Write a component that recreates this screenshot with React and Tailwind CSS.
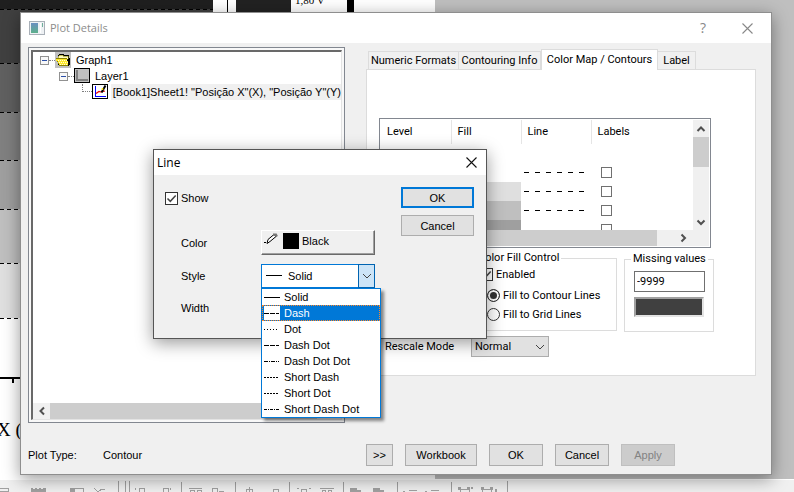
import React, { useState } from "react";

const ui = "font-['Liberation_Sans',Arial,sans-serif] text-[11px] leading-4 text-black";
const pushButton =
  "flex h-[22px] items-center justify-center border border-[#adadad] bg-[#e1e1e1] leading-4";

function Chevron({ dir, className = "" }) {
  const d = {
    up: "M1.5 7 5 3.5 8.5 7",
    down: "M1.5 3.5 5 7 8.5 3.5",
    left: "M7 1.5 3.5 5 7 8.5",
    right: "M3.5 1.5 7 5 3.5 8.5",
  }[dir];
  return (
    <svg viewBox="0 0 10 10" className={"size-[10px] " + className} fill="none" stroke="#505050" strokeWidth="2">
      <path d={d} />
    </svg>
  );
}

function CloseIcon({ color }) {
  return (
    <svg viewBox="0 0 11 11" className="size-[11px]" fill="none" stroke={color} strokeWidth="1.1">
      <path d="M.5.5l10 10M10.5.5l-10 10" />
    </svg>
  );
}

function Tick({ label, ...rest }) {
  return (
    <label className="flex items-center gap-[3px]">
      <span className="relative flex size-[13px] shrink-0">
        <input
          type="checkbox"
          className="peer size-full appearance-none border border-[#333] bg-white"
          {...rest}
        />
        <svg
          viewBox="0 0 13 13"
          className="pointer-events-none absolute inset-0 hidden peer-checked:block"
          fill="none"
          stroke="#444"
          strokeWidth="1.5"
        >
          <path d="M2.5 6.5 5.3 9.3 10.7 3.5" />
        </svg>
      </span>
      {label}
    </label>
  );
}

function Radio({ label, ...rest }) {
  return (
    <label className="flex h-[19px] items-center gap-[3px]">
      <input
        type="radio"
        name="fill"
        className="size-[13px] shrink-0 appearance-none rounded-full border border-[#333] bg-white checked:bg-[#333] checked:shadow-[inset_0_0_0_2px_white]"
        {...rest}
      />
      {label}
    </label>
  );
}

/* Contour plot behind the dialogs */
function Plot() {
  const bands = [
    [0, 9, "#1f1f1f"],
    [9, 54, "#404040"],
    [63, 49, "#606060"],
    [112, 48, "#808080"],
    [160, 49, "#9f9f9f"],
    [209, 54, "#bfbfbf"],
    [263, 55, "#dfdfdf"],
  ];
  return (
    <svg width="435" height="479" className="block shrink-0 bg-white" shapeRendering="crispEdges">
      {bands.map(([y, h, fill]) => (
        <rect key={y} x="0" y={y} width="213" height={h} fill={fill} />
      ))}
      {[9, 63, 112, 160, 209, 263, 318].map((y) => (
        <path key={y} d={`M0 ${y}.5H213`} stroke="#000" strokeDasharray="4 3" />
      ))}
      <rect x="227" y="0" width="1" height="378" fill="#000" />
      <rect x="236" y="0" width="55" height="378" fill="#222" />
      <rect x="347" y="0" width="7" height="378" fill="#000" />
      <rect x="0" y="377" width="213" height="2" fill="#000" />
      <rect x="12" y="377" width="2" height="6" fill="#000" />
      <text x="295" y="4" fontSize="11" fontFamily="Liberation Serif, serif">1,80 V</text>
      <text x="-3" y="436" fontSize="19" fontFamily="Liberation Serif, serif">X (</text>
    </svg>
  );
}

function Toolbar() {
  return (
    <div className="h-[13px] overflow-hidden border-t border-white bg-[#f0f0f0]">
      <svg width="794" height="12" fill="none" stroke="#a0a0a0" shapeRendering="crispEdges">
        <path d="M118.5 1v11M125.5 1v11M129.5 1v11M181.5 2v10M235.5 2v10M289.5 2v10M343.5 2v10M397.5 2v10M451.5 2v10M507.5 1v11" />
        <path d="M0 8.5h8v4M0 11.5h8M70 8.5h13v4M70 8v4M94 8l4 4 4-3 3 1" />
        <path d="M135.5 8v2M139.5 12V8.500h5V12M163.500 12V8.500h5V12M170.500 8v2" />
        <path d="M189 8.500h13M190.500 12v-2h4v2M197.500 12v-2h4v2M212.500 12V8.500h5V12M219 11.500h5" />
        <path d="M249.500 7v5M246.500 12V9.500h6V12M273.500 12V9.500h5V12M297 8.500h2M301.500 12V9.500h5V12M309 8.500h2M320 8.500h14M322.500 12v-2h3v2M328.500 12v-2h3v2" />
        <path d="M403 11.500h2M409 10.500h8M425 11.500h2M431 10.500h8M460.500 12V9.500h9V12M482.500 12V9.500h9V12" />
        <path
          fill="#a0a0a0"
          stroke="none"
          d="M31 8h2v1h2v-1h2v1h2v-1h2v1h2v-1h3v4h-15zM70 8h5v4h-5zM350 8h7v2h4v2h-11zM373 8h7v2h4v2h-11zM458 7h3v3h-3zM467 7h3v3h-3zM471 7h2v2h-2zM481 7h3v3h-3zM490 7h3v3h-3zM495 9h2v3h-2z"
        />
      </svg>
    </div>
  );
}

function Expander() {
  return (
    <svg width="9" height="9" className="shrink-0" shapeRendering="crispEdges">
      <rect x=".5" y=".5" width="8" height="8" rx="1" fill="#f8f8f8" stroke="#919191" />
      <path d="M2 4.500h5" stroke="#2b4fa8" />
    </svg>
  );
}

function FolderIcon() {
  return (
    <svg width="16" height="16" className="shrink-0 bg-[#c0c0c0]" shapeRendering="crispEdges">
      <path d="M3 3h1V2h5v1h5v3h1v7h-1v1H5v-1H3z" fill="#000" />
      <path d="M3 4h1V3h4v1h5v3H3z" fill="#fffbc0" stroke="#8a8300" strokeWidth=".5" />
      <path d="M1 7h11v2h1v4H4v-2H3V9H1z" fill="#ffe92b" />
      <path d="M1 6.500h11M2 9.500h1M3 11.500h1M4 13.500h9" stroke="#8a8300" />
      <path d="M3 8.500h9M4 10.500h9M5 12.500h8" stroke="#fffde0" strokeDasharray="1 1" />
    </svg>
  );
}

function LayerIcon() {
  return (
    <svg width="16" height="16" className="shrink-0" shapeRendering="crispEdges">
      <rect x=".5" y=".5" width="15" height="14" fill="#c0c0c0" stroke="#000" />
      <path d="M3 2v9.500h11" fill="none" stroke="#808080" strokeWidth="2" />
    </svg>
  );
}

function PlotIcon() {
  return (
    <svg width="16" height="16" className="shrink-0">
      <g shapeRendering="crispEdges">
        <rect x=".5" y=".5" width="15" height="14" fill="#fff" stroke="#000" />
        <path d="M3.500 2v10.500H14" fill="none" stroke="#00f" />
      </g>
      <path d="M4 9.500 7 7.500l2 .5 4-1" fill="none" stroke="#e00" strokeWidth="1.200" />
      <path d="M9.500 8.500 13.500 1.500" stroke="#000" strokeWidth="2" />
      <path d="M10.500 4v2" stroke="#ffe000" strokeWidth="1.500" />
    </svg>
  );
}

function Tree() {
  return (
    <div className="flex w-[317px] shrink-0 border border-[#828790] bg-[#f8f8f8] p-[2px]">
      <div className="flex min-w-0 flex-1 flex-col overflow-hidden border-t-2 border-r border-b border-l-2 border-t-[#696969] border-r-[#e3e3e3] border-b-[#e3e3e3] border-l-[#696969] bg-white">
        <ul role="tree" className="flex-1 whitespace-nowrap">
          <li role="treeitem" className="flex h-4 items-center pl-[7px]">
            <Expander />
            <span className="w-[6px] border-t border-dotted border-[#808080]" />
            <FolderIcon />
            <span className="pl-[5px]">Graph1</span>
          </li>
          <li role="treeitem" className="flex h-4 items-center pl-[26px]">
            <Expander />
            <span className="w-[6px] border-t border-dotted border-[#808080]" />
            <LayerIcon />
            <span className="pl-[5px]">Layer1</span>
          </li>
          <li role="treeitem" aria-selected="true" className="flex h-4 items-center pl-[49px]">
            <span className="h-2 w-[11px] self-start border-b border-l border-dotted border-[#808080]" />
            <PlotIcon />
            <span className="ml-[3px] flex-1 bg-[#f0f0f0] pl-[2px]">[Book1]Sheet1! "Posição X"(X), "Posição Y"(Y)</span>
          </li>
        </ul>
        <div className="flex h-4 bg-[#f0f0f0]">
          <span className="flex w-[17px] items-center justify-center">
            <Chevron dir="left" />
          </span>
          <span className="mr-6 flex-1 bg-[#cdcdcd]" />
        </div>
      </div>
    </div>
  );
}

const levels = [
  { level: "< 0.01", fill: "bg-white" },
  { level: "0.01", fill: "bg-white", line: true, box: true },
  { level: "0.236", fill: "bg-[#dfdfdf]", line: true, box: true },
  { level: "0.463", fill: "bg-[#bfbfbf]", line: true, box: true },
  { level: "", fill: "bg-[#9f9f9f]", box: true },
];

function LevelTable() {
  return (
    <div className="flex h-[130px] w-[332px] flex-col border border-[#828790] bg-white p-px">
      <div className="flex min-h-0 flex-1">
        <div className="flex-1 overflow-hidden">
          <table className="w-full table-fixed text-left">
            <thead>
              <tr className="h-6">
                {["Level", "Fill", "Line"].map((h) => (
                  <th key={h} className="w-[70px] border-r border-[#e5e5e5] pl-[6px] font-normal">
                    {h}
                  </th>
                ))}
                <th className="pl-[6px] font-normal">Labels</th>
              </tr>
            </thead>
            <tbody>
              {levels.map((l) => (
                <tr key={l.fill + l.level} className="h-[19px]">
                  <td className="pl-[6px]">{l.level}</td>
                  <td className={l.fill} />
                  <td className="pl-[3px]">
                    {l.line && (
                      <svg width="62" height="2" className="block" shapeRendering="crispEdges">
                        <path d="M0 .5h62" stroke="#000" strokeDasharray="5 6" />
                      </svg>
                    )}
                  </td>
                  <td className="pl-[10px]">
                    {l.box && (
                      <input
                        type="checkbox"
                        aria-label="Show label"
                        className="block size-[11px] appearance-none border border-[#707070] bg-white"
                      />
                    )}
                  </td>
                </tr>
              ))}
            </tbody>
          </table>
        </div>
        <div className="flex w-4 flex-col items-center bg-[#f0f0f0]">
          <span className="flex h-[17px] items-center">
            <Chevron dir="up" />
          </span>
          <span className="h-[30px] w-full bg-[#cdcdcd]" />
          <span className="flex-1" />
          <span className="flex h-[17px] items-center">
            <Chevron dir="down" />
          </span>
        </div>
      </div>
      <div className="flex h-4 items-center bg-[#f0f0f0]">
        <span className="h-full w-[276px] bg-[#cdcdcd]" />
        <span className="flex flex-1 items-center justify-center">
          <Chevron dir="right" />
        </span>
      </div>
    </div>
  );
}

function Tabs() {
  const tab = "h-[18px] border border-b-0 border-[#dcdcdc] bg-[#f0f0f0] leading-[18px] whitespace-nowrap";
  return (
    <div role="tablist" className="flex h-5 items-end pl-[2px]">
      <button role="tab" className={tab + " w-[90px] border-r-0"}>Numeric Formats</button>
      <button role="tab" className={tab + " w-[83px]"}>Contouring Info</button>
      <button role="tab" aria-selected="true" className="relative z-10 -mb-px h-[21px] w-[117px] border border-b-0 border-[#dcdcdc] bg-white leading-4 whitespace-nowrap">
        Color Map / Contours
      </button>
      <button role="tab" className={tab + " w-[38px] border-l-0"}>Label</button>
    </div>
  );
}

function ColorMapPanel() {
  return (
    <div className="flex-1 border border-[#dcdcdc] bg-white pt-12 pl-3">
      <LevelTable />
      <div className="mt-1 flex gap-[7px] pl-[91px]">
        <fieldset className="h-[79px] w-[147px] border border-[#dcdcdc] pl-[9px]">
          <legend className="-ml-1 px-[2px] leading-3">Color Fill Control</legend>
          <div className="flex h-[22px] items-center pb-px">
            <Tick label="Enabled" defaultChecked />
          </div>
          <div className="pl-[7px]">
            <Radio label="Fill to Contour Lines" defaultChecked />
            <Radio label="Fill to Grid Lines" />
          </div>
        </fieldset>
        <fieldset className="h-[80px] w-[90px] border border-[#dcdcdc] pl-[9px]">
          <legend className="-ml-[3px] px-[2px]">
            <label htmlFor="missing" className="block leading-[14px]">Missing values</label>
          </legend>
          <input
            id="missing"
            defaultValue="-9999"
            className="mt-[5px] block h-[21px] w-[71px] border border-[#707070] bg-white px-[2px]"
          />
          <button
            aria-label="Missing value color"
            className="mt-[5px] block h-5 w-[70px] border-2 border-t-[#a0a0a0] border-r-[#e3e3e3] border-b-[#e3e3e3] border-l-[#a0a0a0] bg-[#404040]"
          />
        </fieldset>
      </div>
      <div className="mt-[4px] flex items-center pl-[6px]">
        <label htmlFor="rescale" className="w-[86px]">Rescale Mode</label>
        <span className="relative flex">
          <select
            id="rescale"
            className="h-[21px] w-[78px] appearance-none border border-[#adadad] bg-[#e1e1e1] pl-[3px]"
          >
            <option>Normal</option>
          </select>
          <svg viewBox="0 0 10 10" className="pointer-events-none absolute top-[6px] right-1 size-[10px]" fill="none" stroke="#444">
            <path d="M1 3l4 4 4-4" />
          </svg>
        </span>
      </div>
    </div>
  );
}

const styles = [
  ["Solid", "none"],
  ["Dash", "5 1"],
  ["Dot", "1 2"],
  ["Dash Dot", "5 1"],
  ["Dash Dot Dot", "4 1 1 1"],
  ["Short Dash", "2 1"],
  ["Short Dot", "2 1"],
  ["Short Dash Dot", "3 1 1 1"],
];

function StylePicker({ value, onChange }) {
  return (
    <div className="relative">
      <select
        id="style"
        value={value}
        onChange={(e) => onChange(e.target.value)}
        className="block h-6 w-[114px] appearance-none border border-[#0078d7] bg-white pl-[26px]"
      >
        {styles.map(([name]) => (
          <option key={name}>{name}</option>
        ))}
      </select>
      <svg width="16" height="1" className="pointer-events-none absolute top-[11px] left-[5px] bg-black" />
      <span className="pointer-events-none absolute inset-y-0 right-0 flex w-[17px] items-center justify-center border border-[#0063b1] bg-[#cce4f7]">
        <svg viewBox="0 0 10 10" className="size-[10px]" fill="none" stroke="#444">
          <path d="M1 3l4 4 4-4" />
        </svg>
      </span>
      <ul
        role="listbox"
        aria-label="Style"
        className="absolute top-6 left-0 w-[120px] border border-[#0078d7] bg-white shadow-[3px_3px_3px_rgba(0,0,0,0.45)]"
      >
        {styles.map(([name, dash]) => {
          const hot = name === "Dash";
          return (
            <li
              key={name}
              role="option"
              aria-selected={hot}
              onClick={() => onChange(name)}
              className={
                "flex h-4 items-center border border-dotted " +
                (hot ? "border-[#ff8728] bg-[#0078d7] text-white" : "border-transparent")
              }
            >
              <svg width="16" height="14" className="ml-px bg-white" shapeRendering="crispEdges">
                <path d={name === "Solid" ? "M0 7.500h16" : "M0 7.500h15"} stroke="#000" strokeDasharray={dash} />
              </svg>
              <span className="pl-1">{name}</span>
            </li>
          );
        })}
      </ul>
    </div>
  );
}

function LineDialog() {
  const [style, setStyle] = useState("Solid");
  return (
    <section
      role="dialog"
      aria-label="Line"
      className="absolute top-[149px] left-[153px] z-20 flex h-[190px] w-[334px] flex-col border border-[#555] bg-[#f0f0f0] shadow-[0_4px_16px_rgba(0,0,0,0.4)]"
    >
      <header className="flex h-[25px] items-center justify-between bg-white pr-[9px] pl-[3px]">
        <h2 className="font-['Open_Sans',sans-serif] text-[12px]">Line</h2>
        <button aria-label="Close"><CloseIcon color="#111" /></button>
      </header>
      <div className="flex justify-between pt-3 pr-3 pl-[11px]">
        <div>
          <div className="flex h-[22px] items-center">
            <Tick label="Show" defaultChecked />
          </div>
          <div className="mt-[21px] grid grid-cols-[80px_114px] items-center gap-y-[9px] pl-4">
            <label htmlFor="color">Color</label>
            <button
              id="color"
              className="flex h-[25px] items-start border border-t-white border-r-[#696969] border-b-[#696969] border-l-white pt-[2px] pl-[2px] shadow-[inset_-1px_-1px_0_#a0a0a0]"
            >
              <svg width="15" height="14" fill="none" stroke="#000">
                <path d="M0 9.500h2M3 10.500l1-4 6-5 2 2-6 5z" fill="#fff" />
                <path d="M9 1.500h3l1 2" stroke="#777" strokeWidth="2" />
              </svg>
              <span className="ml-1 size-4 bg-black" />
              <span className="pl-[3px]">Black</span>
            </button>
            <label htmlFor="style">Style</label>
            <StylePicker value={style} onChange={setStyle} />
            <span className="pt-[3px]">Width</span>
          </div>
        </div>
        <div className="flex w-[73px] flex-col gap-[7px]">
          <button className="flex h-[21px] items-center justify-center border-2 border-[#0078d7] bg-[#e1e1e1]">OK</button>
          <button className="flex h-[21px] items-center justify-center border border-[#adadad] bg-[#e1e1e1]">Cancel</button>
        </div>
      </div>
    </section>
  );
}

function PlotDetails() {
  return (
    <section
      role="dialog"
      aria-label="Plot Details"
      className="absolute top-[12px] right-[22px] bottom-[17px] left-[20px] z-10 flex flex-col border border-[#8e8e8e] bg-[#f0f0f0] shadow-[0_4px_16px_rgba(0,0,0,0.4)]"
    >
      <header className="flex h-[30px] shrink-0 items-center bg-white pr-[18px] pl-2">
        <svg width="16" height="14" viewBox="0 0 16 14">
          <rect x=".5" y=".5" width="15" height="13" fill="#eef1f4" stroke="#a9b0b8" />
          <defs>
            <linearGradient id="app" x2="0" y2="1">
              <stop stopColor="#6a8fc0" />
              <stop offset="1" stopColor="#5db08c" />
            </linearGradient>
          </defs>
          <rect x="2" y="2" width="7" height="10" fill="url(#app)" />
          <path d="M11.500 2v10" stroke="#fff" />
          <path d="M13.500 2v4" stroke="#6fae9b" />
        </svg>
        <h1 className="flex-1 pl-[5px] font-['Open_Sans',sans-serif] text-[11px] text-[#8c8c8c]">Plot Details</h1>
        <button aria-label="Help" className="mr-9 font-['Open_Sans',sans-serif] text-[14px] text-[#888]">?</button>
        <button aria-label="Close"><CloseIcon color="#888" /></button>
      </header>
      <div className="flex min-h-0 flex-1 gap-[21px] pt-1 pr-[15px] pl-[7px]">
        <Tree />
        <div className="flex min-w-0 flex-1 flex-col pt-[2px] pb-[47px] font-['Roboto',sans-serif]">
          <Tabs />
          <ColorMapPanel />
        </div>
      </div>
      <footer className="flex h-[51px] shrink-0 items-center gap-3 pt-[12px] pr-24 pl-[7px]">
        <span className="w-[63px]">Plot Type:</span>
        <span className="flex-1">Contour</span>
        <button className={pushButton + " w-[27px]"}>&gt;&gt;</button>
        <button className={pushButton + " w-[72px]"}>Workbook</button>
        <button className={pushButton + " w-[54px]"}>OK</button>
        <button className={pushButton + " w-[54px]"}>Cancel</button>
        <button disabled className="h-[22px] w-[54px] border border-[#bfbfbf] bg-[#ccc] text-[#838383]">Apply</button>
      </footer>
    </section>
  );
}

export default function App() {
  return (
    <main className={"relative flex h-screen flex-col overflow-hidden bg-[#bfbfbf] " + ui}>
      <div className="min-h-0 flex-1 overflow-hidden">
        <Plot />
      </div>
      <Toolbar />
      <PlotDetails />
      <LineDialog />
    </main>
  );
}
